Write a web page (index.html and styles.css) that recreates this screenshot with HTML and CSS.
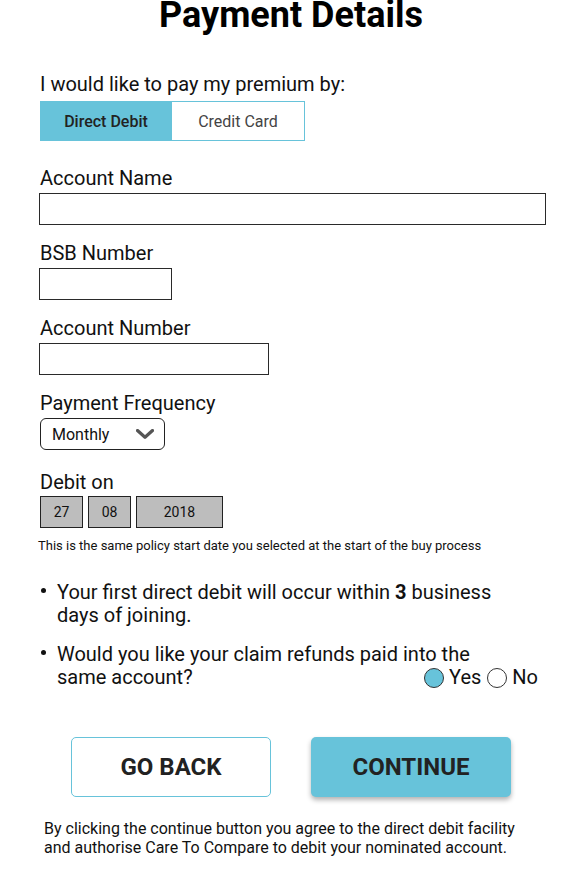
FILE: index.html
```html
<!DOCTYPE html>
<html lang="en">
<head>
<meta charset="utf-8">
<title>Payment Details</title>
<link rel="stylesheet" href="styles.css">
</head>
<body>
<main class="page">
  <h1 class="title">Payment Details</h1>

  <p class="lead">I would like to pay my premium by:</p>
  <div class="toggle">
    <span class="seg seg-active">Direct Debit</span>
    <span class="seg">Credit Card</span>
  </div>

  <div class="field field-first">
    <label class="label">Account Name</label>
    <div class="input input-name"></div>
  </div>
  <div class="field">
    <label class="label">BSB Number</label>
    <div class="input input-bsb"></div>
  </div>
  <div class="field">
    <label class="label">Account Number</label>
    <div class="input input-acct"></div>
  </div>
  <div class="field">
    <label class="label">Payment Frequency</label>
    <div class="select">
      <span>Monthly</span>
      <svg class="chev" width="18" height="10" viewBox="0 0 18 10"><path d="M1.5 1.5 L9 8.3 L16.5 1.5" fill="none" stroke="#555" stroke-width="3.2" stroke-linecap="round" stroke-linejoin="round"/></svg>
    </div>
  </div>

  <div class="field field-date">
    <label class="label label-date">Debit on</label>
    <div class="date">
      <span class="dbox dbox-s">27</span>
      <span class="dbox dbox-s">08</span>
      <span class="dbox dbox-l">2018</span>
    </div>
  </div>
  <p class="note">This is the same policy start date you selected at the start of the buy process</p>

  <ul class="bullets">
    <li>Your first direct debit will occur within <b>3</b> business<br>days of joining.</li>
    <li>Would you like your claim refunds paid into the<br><span class="radios"><span class="radio radio-on"></span><span class="rlabel">Yes</span><span class="radio"></span><span class="rlabel">No</span></span>same account?</li>
  </ul>

  <div class="actions">
    <button class="btn btn-back">GO BACK</button>
    <button class="btn btn-next">CONTINUE</button>
  </div>

  <p class="legal">By clicking the continue button you agree to the direct debit facility<br>and authorise Care To Compare to debit your nominated account.</p>
</main>
</body>
</html>
```
FILE: styles.css
```css
* { box-sizing: border-box; }
html, body { margin: 0; padding: 0; background: #fff; }
body {
  font-family: Roboto, "Liberation Sans", sans-serif;
  color: #111;
  width: 579px;
}
.page { padding: 0 40px; }

.title {
  margin: 0 0 43px;
  font-size: 36px;
  line-height: 30px;
  font-weight: 700;
  text-align: center;
  color: #000;
  padding-left: 3px;
}

.lead {
  margin: 0 0 6px;
  font-size: 20px;
  line-height: 22px;
}

.toggle {
  display: flex;
  width: 265px;
  height: 40px;
  border: 1px solid #67c3da;
  margin-bottom: 26px;
}
.seg {
  flex: 1;
  display: flex;
  align-items: center;
  justify-content: center;
  font-size: 16px;
  color: #444;
}
.seg-active {
  flex: 0 0 132px;
  background: #67c3da;
  color: #222;
  font-weight: 500;
  margin: -1px 0 -1px -1px;
}

.field { margin-top: 17px; }
.field-first { margin-top: 0; }
.label {
  display: block;
  font-size: 20px;
  line-height: 22px;
  margin-bottom: 4px;
}
.input {
  height: 32px;
  border: 1.5px solid #2a2a2a;
  margin-left: -1px;
}
.input-name { width: 507px; }
.input-bsb { width: 133px; }
.input-acct { width: 230px; }

.select {
  width: 125px;
  height: 32px;
  border: 1px solid #222;
  border-radius: 6px;
  display: flex;
  align-items: center;
  justify-content: space-between;
  padding: 0 10px 0 11px;
  font-size: 16px;
  color: #111;
}

.field-date { margin-top: 21px; }
.label-date { margin-bottom: 3px; }
.date { display: flex; gap: 5px; }
.dbox {
  height: 32px;
  border: 1.5px solid #222;
  background: #bdbdbd;
  display: flex;
  align-items: center;
  justify-content: center;
  font-size: 14px;
  color: #111;
}
.dbox-s { width: 43px; }
.dbox-l { width: 87px; }

.note {
  margin: 10px 0 0 -2px;
  font-size: 13px;
  line-height: 16px;
}

.bullets {
  list-style: none;
  margin: 27px 1px 0 0;
  padding: 0;
}
.bullets li {
  position: relative;
  padding-left: 17px;
  font-size: 20px;
  line-height: 23px;
  margin-bottom: 16px;
}
.bullets li:last-child { margin-bottom: 0; }
.bullets li::before {
  content: "";
  position: absolute;
  left: 1px;
  top: 7px;
  width: 5px;
  height: 5px;
  border-radius: 50%;
  background: #111;
}
.bullets b { font-weight: 700; }

.radios {
  float: right;
  display: flex;
  align-items: center;
  height: 23px;
}
.radio {
  width: 20px;
  height: 20px;
  border-radius: 50%;
  border: 1px solid #333;
  background: #fff;
  margin-right: 5px;
}
.radio-on { background: #67c3da; }
.rlabel { margin-right: 6px; }
.rlabel:last-child { margin-right: 0; }

.actions {
  display: flex;
  gap: 40px;
  padding-left: 31px;
  margin-top: 48px;
}
.btn {
  width: 200px;
  height: 60px;
  font-family: Roboto, "Liberation Sans", sans-serif;
  font-size: 24px;
  font-weight: 700;
  color: #222;
  border-radius: 5px;
  cursor: pointer;
}
.btn-back {
  background: #fff;
  border: 1px solid #67c3da;
}
.btn-next {
  background: #67c3da;
  border: none;
  box-shadow: 0 3px 5px rgba(0, 0, 0, 0.3);
}

.legal {
  margin: 23px 0 0 4px;
  font-size: 16px;
  line-height: 18.5px;
}
```
